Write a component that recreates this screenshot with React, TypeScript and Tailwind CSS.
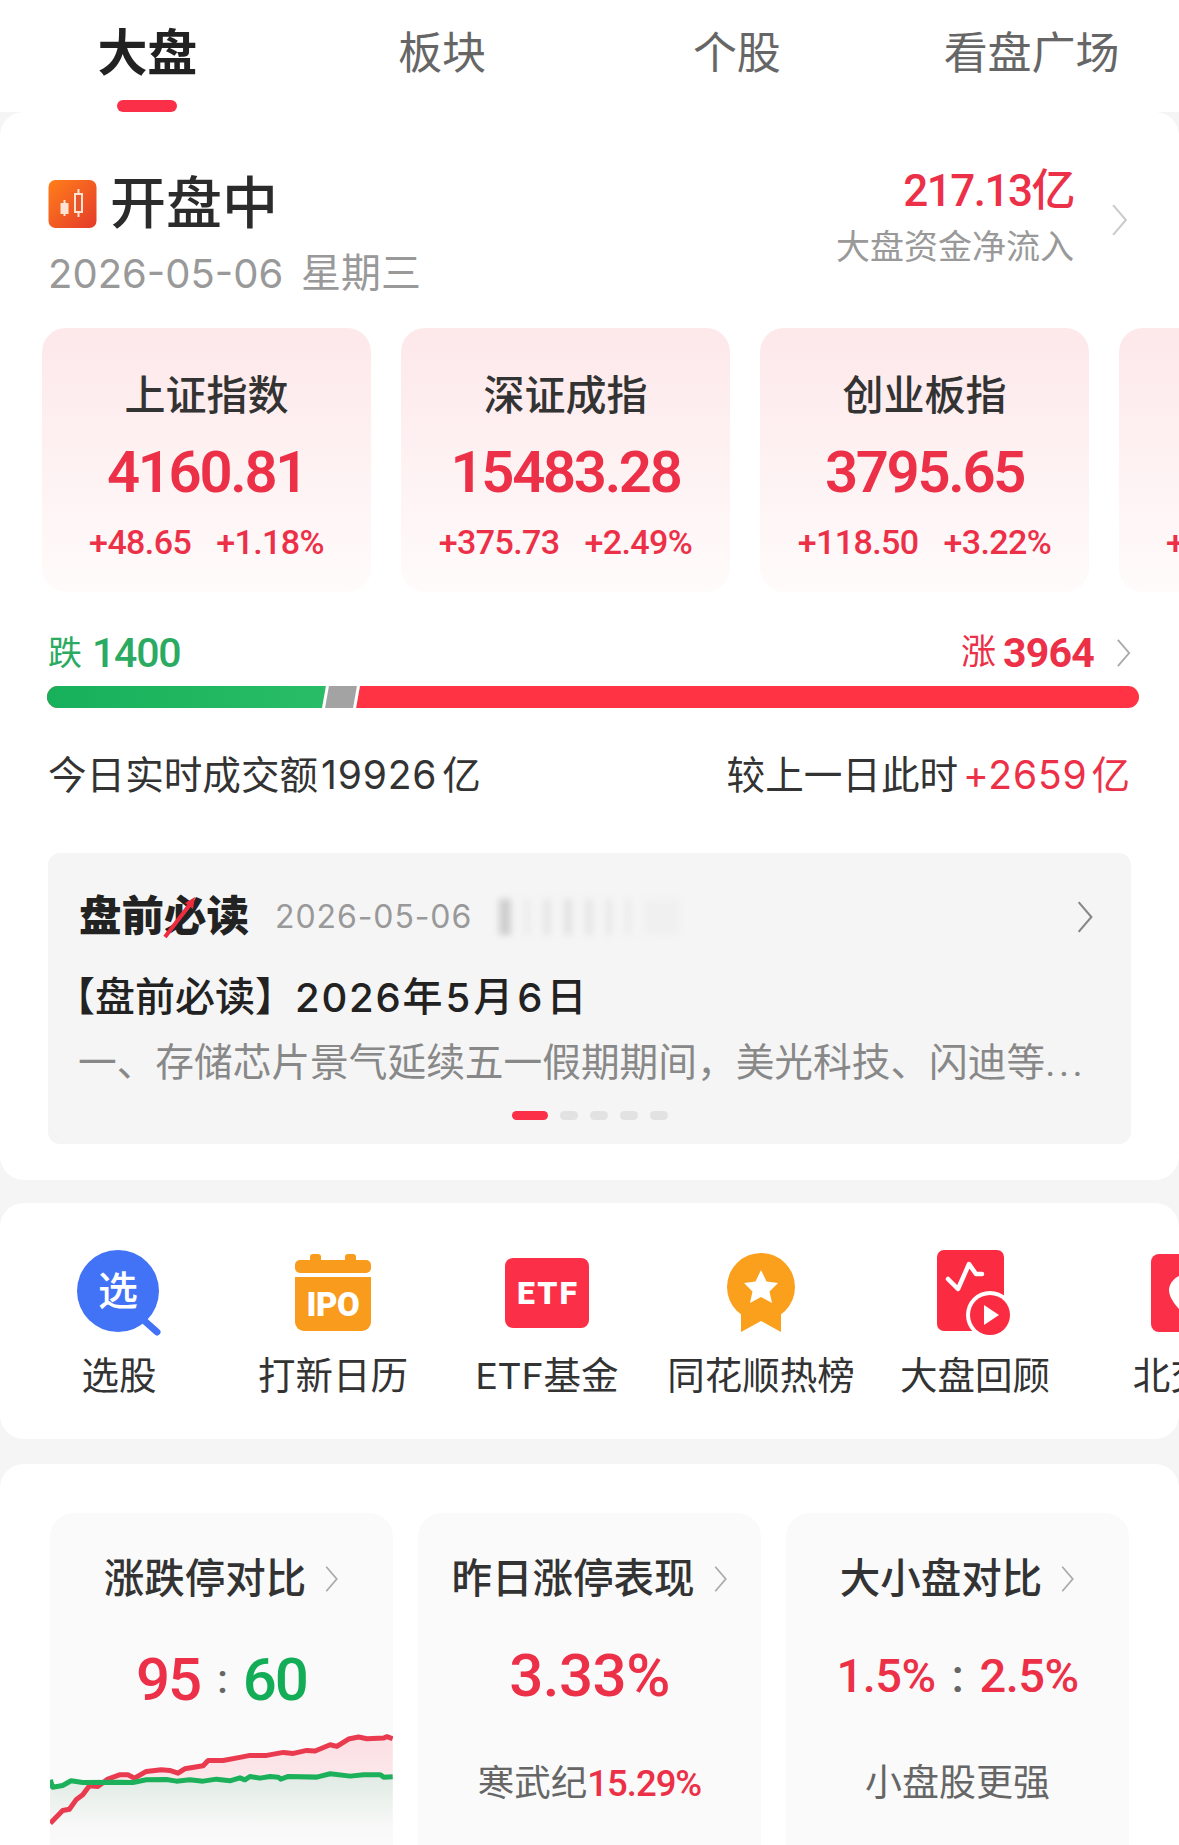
const redPts = "33,400 70,362 90,358 110,330 130,315 150,288 175,290 205,268 240,255 265,255 285,265 320,245 365,240 390,242 415,250 435,237 490,228 505,212 550,212 600,203 630,197 680,197 730,188 760,191 800,182 825,184 870,165 890,170 925,148 955,142 980,147 1030,145 1040,141 1057,147";
const greenPts = "33,270 40,292 70,287 95,273 130,278 240,277 280,278 320,270 380,269 410,274 450,270 490,274 530,268 570,273 600,264 615,270 630,260 660,265 690,260 715,262 722,268 745,260 830,262 870,252 930,259 970,255 1020,255 1030,262 1057,261";

const indices = [
  { name: "上证指数", value: "4160.81", diff: "+48.65", pct: "+1.18%" },
  { name: "深证成指", value: "15483.28", diff: "+375.73", pct: "+2.49%" },
  { name: "创业板指", value: "3795.65", diff: "+118.50", pct: "+3.22%" },
  { name: "科创50", value: "1445.12", diff: "+25.36", pct: "+1.68%" },
];

function Chevron({ className }: { className: string }) {
  return (
    <svg viewBox="0 0 16 32" fill="none" className={className}>
      <path d="M2 2 L14 16 L2 30" stroke="currentColor" strokeWidth="2" />
    </svg>
  );
}

function XuanIcon() {
  return (
    <svg width="84" height="86" viewBox="0 0 84 86">
      <path d="M62 66 L80 82" stroke="#4272f5" strokeWidth="7" strokeLinecap="round" />
      <circle cx="41" cy="41" r="41" fill="#4272f5" />
      <text x="41" y="55" textAnchor="middle" fontSize="40" fontWeight="500" fill="#fff" fontFamily="Noto Sans CJK SC">选</text>
    </svg>
  );
}

function IpoIcon() {
  return (
    <svg width="76" height="78" viewBox="0 0 76 78">
      <rect x="15" y="0" width="11" height="12" rx="3" fill="#f99b1c" />
      <rect x="50" y="0" width="11" height="12" rx="3" fill="#f99b1c" />
      <rect x="0" y="6" width="76" height="13" rx="5" fill="#f99b1c" />
      <path d="M0 23 H76 V68 a9 9 0 0 1 -9 9 H9 a9 9 0 0 1 -9 -9 Z" fill="#f99b1c" />
      <text x="38" y="62" textAnchor="middle" fontSize="33" fontWeight="900" fill="#fff" fontFamily="Roboto" letterSpacing="-0.5">IPO</text>
    </svg>
  );
}

function EtfIcon() {
  return (
    <svg width="84" height="70" viewBox="0 0 84 70">
      <rect width="84" height="70" rx="8" fill="#fb2f48" />
      <text x="43" y="46" textAnchor="middle" fontSize="32" fontWeight="900" fill="#fff" fontFamily="Roboto" letterSpacing="2">ETF</text>
    </svg>
  );
}

function MedalIcon() {
  return (
    <svg width="68" height="80" viewBox="0 0 68 80">
      <path d="M14 50 V79 L34 68 L54 79 V50 Z" fill="#fba01c" />
      <circle cx="34" cy="34" r="34" fill="#fba01c" />
      <path d="M34 17 L39.5 28.5 L51 30 L42.5 38.5 L45 50 L34 44 L23 50 L25.5 38.5 L17 30 L28.5 28.5 Z" fill="#fff" />
    </svg>
  );
}

function ReviewIcon() {
  return (
    <svg width="76" height="86" viewBox="0 0 76 86">
      <rect width="67" height="81" rx="7" fill="#fb2c42" />
      <path d="M11 29 L21 39 L32 14 L39 24 L45 24" fill="none" stroke="#fff" strokeWidth="4.5" strokeLinejoin="round" strokeLinecap="round" />
      <circle cx="53" cy="65" r="24" fill="#fff" />
      <circle cx="53" cy="65" r="20" fill="#fb2c42" />
      <path d="M47 55 L62 65 L47 75 Z" fill="#fff" />
    </svg>
  );
}

function BeiIcon() {
  return (
    <svg width="76" height="78" viewBox="0 0 76 78">
      <rect width="76" height="78" rx="8" fill="#fb2f48" />
      <path d="M38 20 C52 20 58 30 58 36 C58 46 46 58 38 64 C30 58 18 46 18 36 C18 30 24 20 38 20 Z" fill="#fff" />
    </svg>
  );
}

const shortcuts = [
  { label: "选股", icon: <XuanIcon /> },
  { label: "打新日历", icon: <IpoIcon /> },
  { label: <><span className="tracking-[1px]">ETF</span>基金</>, icon: <EtfIcon /> },
  { label: "同花顺热榜", icon: <MedalIcon /> },
  { label: "大盘回顾", icon: <ReviewIcon /> },
  { label: "北交所", icon: <BeiIcon /> },
];

function SubCardTitle({ title }: { title: string }) {
  return (
    <div className="flex h-[44px] items-center justify-center gap-[18px]">
      <span className="text-[40.5px] leading-[44px] font-medium text-[#333]">{title}</span>
      <Chevron className="h-[28px] w-[15px] text-[#aaa]" />
    </div>
  );
}

export default function App() {
  return (
    <div className="h-[1845px] w-[1179px] overflow-hidden bg-[#f5f5f5] [font-family:Roboto,'Noto_Sans_CJK_SC',sans-serif]">
      {/* tabs */}
      <div className="grid h-[112px] grid-cols-4 bg-white">
        <div className="relative flex justify-center pt-[24px] text-[50px] leading-[60px] font-semibold text-[#222]">
          大盘
          <div className="absolute bottom-0 left-[117px] h-[12px] w-[60px] rounded-full bg-[#fb3048]" />
        </div>
        <div className="flex justify-center pt-[24px] text-[44px] leading-[60px] text-[#666]">板块</div>
        <div className="flex justify-center pt-[24px] text-[44px] leading-[60px] text-[#666]">个股</div>
        <div className="flex justify-center pt-[24px] text-[44px] leading-[60px] text-[#666]">看盘广场</div>
      </div>

      {/* market card */}
      <div className="h-[1068px] rounded-[24px] bg-white">
        <div className="flex justify-between pr-[49px] pl-[48px]">
          <div className="pt-[62px]">
            <div className="flex h-[60px] items-center gap-[13px]">
              <svg width="49" height="48" viewBox="0 0 48 48">
                <defs>
                  <linearGradient id="openIcon" x1="0" y1="0" x2="1" y2="1">
                    <stop offset="0" stopColor="#ff7f1a" />
                    <stop offset="1" stopColor="#e53a2a" />
                  </linearGradient>
                </defs>
                <rect width="48" height="48" rx="7" fill="url(#openIcon)" />
                <path d="M16 20 V36 M30 9 V37" stroke="#ffe3d2" strokeWidth="2" />
                <rect x="12" y="23" width="8" height="11" fill="#ffe3d2" />
                <rect x="26.5" y="14" width="7" height="18" fill="#e8552a" stroke="#ffe3d2" strokeWidth="2" />
              </svg>
              <span className="text-[56px] leading-[60px] font-medium text-[#2b2b2b]">开盘中</span>
            </div>
            <div className="mt-[16px] flex h-[48px] items-center text-[40px] leading-[48px] text-[#999]">
              <span className="w-[253px] font-['Inter']">2026-05-06</span>
              <span>星期三</span>
            </div>
          </div>
          <div className="flex">
            <div className="flex flex-col items-end">
              <div className="mt-[57px] text-[44px] leading-[44px] font-medium tracking-[-1.5px] text-[#ec3048]">217.13亿</div>
              <div className="mt-[12px] text-[34px] leading-[44px] text-[#999]">大盘资金净流入</div>
            </div>
            <Chevron className="mt-[91px] mr-[1px] ml-[36px] h-[34px] w-[19px] text-[#ccc]" />
          </div>
        </div>

        <div className="mt-[30px] flex gap-[30px] overflow-hidden pl-[42px]">
          {indices.map((item) => (
            <div key={item.name} className="flex h-[264px] w-[329px] shrink-0 flex-col items-center rounded-[24px] bg-gradient-to-b from-[#fde8ea] to-[#fffbfb] pt-[46px]">
              <div className="text-[41px] leading-[44px] font-medium text-[#333]">{item.name}</div>
              <div className="mt-[24px] text-[58px] leading-[60px] font-semibold tracking-[-2.3px] text-[#ec3048]">{item.value}</div>
              <div className="mt-[20px] flex gap-[25px] text-[34px] leading-[40px] font-medium tracking-[-0.6px] text-[#ec3048]">
                <span>{item.diff}</span>
                <span>{item.pct}</span>
              </div>
            </div>
          ))}
        </div>

        <div className="pr-[49px] pl-[48px]">
          <div className="mt-[41px] flex h-[40px] items-center justify-between">
            <div className="flex items-center gap-[10px] text-[#2bab62]">
              <span className="text-[34px] leading-[40px]">跌</span>
              <span className="text-[41px] leading-[40px] font-medium tracking-[-1.2px]">1400</span>
            </div>
            <div className="flex items-center text-[#ec3048]">
              <span className="text-[35px] leading-[40px]">涨</span>
              <span className="ml-[7px] text-[41px] leading-[40px] font-bold tracking-[-0.8px]">3964</span>
              <Chevron className="mr-[-2px] ml-[21px] h-[30px] w-[17px] text-[#aaa]" />
            </div>
          </div>
          <div className="mt-[13px] mr-[-9px] ml-[-1px] flex h-[22px] overflow-hidden rounded-full bg-[#ff3344]">
            <div className="w-[279px] bg-gradient-to-r from-[#17b05b] to-[#28bd66]" />
            <div className="relative z-10 -ml-[2px] w-[34px] -skew-x-[10deg] border-x-[3px] border-white bg-[#a3a3a3]" />
            <div className="flex-1" />
          </div>
          <div className="mt-[47px] flex h-[40px] items-center justify-between text-[38.6px] leading-[40px] text-[#333]">
            <span>今日实时成交额<span className="mr-[5px] ml-[3px] font-['Inter'] text-[39px] tracking-[0.8px]">19926</span>亿</span>
            <span>较上一日此时<span className="ml-[5px] text-[#ec3048]"><span className="mr-[4px] font-['Inter'] text-[39px] tracking-[0.8px]">+2659</span>亿</span></span>
          </div>
        </div>

        {/* article card */}
        <div className="mt-[58px] ml-[48px] h-[291px] w-[1083px] rounded-[12px] bg-[#f5f5f5] pt-[42px]">
          <div className="flex h-[44px] items-center pr-[36px] pl-[31px]">
            <div className="relative text-[42.5px] leading-[44px] font-black text-[#222]">
              盘前必读
              <svg className="absolute top-0 left-0" width="172" height="44" viewBox="0 0 172 44">
                <path d="M86 42 L112 8" stroke="#ee2c40" strokeWidth="4" />
                <path d="M116 2 L114 14 L106 8 Z" fill="#ee2c40" />
              </svg>
            </div>
            <span className="ml-[26px] font-['Inter'] text-[32px] leading-[44px] tracking-[0.9px] text-[#999]">2026-05-06</span>
            <div className="ml-[27px] flex h-[36px] gap-[13px] blur-[3px]">
              <div className="h-full w-[12px] bg-[#cfcfcf]" />
              <div className="h-full w-[6px] bg-[#ececec]" />
              <div className="h-full w-[8px] bg-[#e6e6e6]" />
              <div className="h-full w-[8px] bg-[#e2e2e2]" />
              <div className="h-full w-[8px] bg-[#e6e6e6]" />
              <div className="h-full w-[6px] bg-[#e8e8e8]" />
              <div className="h-full w-[6px] bg-[#ececec]" />
              <div className="h-full w-[36px] bg-[#f0f0f0]" />
            </div>
            <Chevron className="ml-auto h-[34px] w-[20px] text-[#888]" />
          </div>
          <div className="mt-[37px] flex pl-[7px] text-[40px] leading-[44px] font-medium text-[#222]">
            【盘前必读】<span className="font-['Inter'] tracking-[1.8px]">2026</span>年<span className="mx-[3px] font-['Inter']">5</span>月<span className="mx-[4px] font-['Inter']">6</span>日
          </div>
          <div className="mt-[21px] pl-[30px] text-[38.7px] leading-[44px] whitespace-nowrap text-[#888]">
            一、存储芯片景气延续五一假期期间，美光科技、闪迪等<span className="tracking-[3.5px]">...</span>
          </div>
          <div className="mt-[26px] flex h-[9px] justify-center gap-[12px]">
            <div className="w-[36px] rounded-full bg-[#fb2f48]" />
            <div className="w-[18px] rounded-full bg-[#e2e2e2]" />
            <div className="w-[18px] rounded-full bg-[#e2e2e2]" />
            <div className="w-[18px] rounded-full bg-[#e2e2e2]" />
            <div className="w-[18px] rounded-full bg-[#e2e2e2]" />
          </div>
        </div>
      </div>

      {/* shortcuts */}
      <div className="mt-[23px] flex h-[236px] overflow-hidden rounded-[24px] bg-white pt-[45px] pl-[12px]">
        {shortcuts.map((item, i) => (
          <div key={i} className="flex w-[214px] shrink-0 flex-col items-center">
            <div className="flex h-[90px] items-center">{item.icon}</div>
            <div className="mt-[16px] text-[37.5px] leading-[44px] whitespace-nowrap text-[#333]">{item.label}</div>
          </div>
        ))}
      </div>

      {/* compare cards */}
      <div className="mt-[25px] flex gap-[25px] rounded-[24px] bg-white pt-[49px] pl-[50px]">
        <div className="h-[360px] w-[343px] overflow-hidden rounded-[24px] bg-[#fafafa] pt-[44px]">
          <SubCardTitle title="涨跌停对比" />
          <div className="mt-[49px] flex h-[60px] items-center justify-center text-[60px] leading-[60px] font-medium tracking-[-2px]">
            <span className="text-[#ec3048]">95</span>
            <span className="mx-[17px] text-[40px] leading-[50px] text-[#666]">:</span>
            <span className="text-[#14ad57]">60</span>
          </div>
          <svg className="mt-[23px]" width="343" height="112" viewBox="33 130 1024 335">
            <defs>
              <linearGradient id="redFill" x1="0" y1="0" x2="0" y2="1">
                <stop offset="0" stopColor="#fbdfe3" />
                <stop offset="1" stopColor="#fdf1f3" />
              </linearGradient>
              <linearGradient id="greenFill" x1="0" y1="0" x2="0" y2="1">
                <stop offset="0" stopColor="#dfeae3" />
                <stop offset="0.7" stopColor="#f7f8f7" />
                <stop offset="1" stopColor="#fafafa" />
              </linearGradient>
            </defs>
            <polygon points={`${redPts} 1057,300 33,300`} fill="url(#redFill)" />
            <polygon points={`${greenPts} 1057,465 33,465`} fill="url(#greenFill)" />
            <polyline points={redPts} fill="none" stroke="#ea3a50" strokeWidth="15" strokeLinejoin="round" />
            <polyline points={greenPts} fill="none" stroke="#1cb05a" strokeWidth="15" strokeLinejoin="round" />
          </svg>
        </div>

        <div className="h-[360px] w-[343px] rounded-[24px] bg-[#fafafa] pt-[44px]">
          <SubCardTitle title="昨日涨停表现" />
          <div className="mt-[45px] text-center text-[60px] leading-[60px] font-medium tracking-[-0.5px] text-[#ec3048]">3.33%</div>
          <div className="mt-[56px] flex h-[44px] items-center justify-center text-[36.5px] leading-[44px] text-[#666]">
            寒武纪<span className="font-medium tracking-[-1px] text-[#ec3048]">15.29%</span>
          </div>
        </div>

        <div className="h-[360px] w-[343px] rounded-[24px] bg-[#fafafa] pt-[44px]">
          <SubCardTitle title="大小盘对比" />
          <div className="mt-[45px] flex h-[60px] items-center justify-center text-[47px] leading-[60px] font-medium tracking-[-0.5px] text-[#ec3048]">
            <span>1.5%</span>
            <span className="mx-[16px] text-[#666]">:</span>
            <span>2.5%</span>
          </div>
          <div className="mt-[56px] text-center text-[37px] leading-[44px] text-[#666]">小盘股更强</div>
        </div>
      </div>
    </div>
  );
}
